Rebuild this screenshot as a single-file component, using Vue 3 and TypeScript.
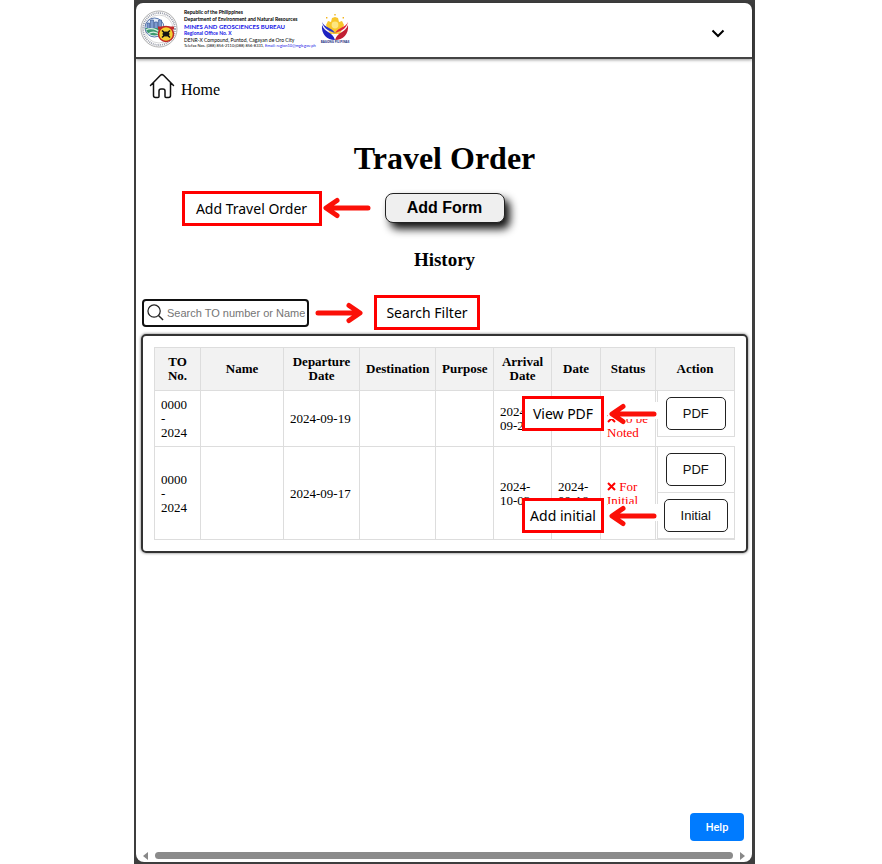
<script setup lang="ts">
interface Action {
  label: string
  hint?: string
}

interface TravelOrder {
  id: number
  departure: string
  arrival: string
  date: string
  status: string[]
  lowStatus: boolean
  actions: Action[]
}

const columns = ['TO No.', 'Name', 'Departure Date', 'Destination', 'Purpose', 'Arrival Date', 'Date', 'Status', 'Action']

const orders: TravelOrder[] = [
  {
    id: 1,
    departure: '2024-09-19',
    arrival: '2024-09-20',
    date: '',
    status: ['To be', 'Noted'],
    lowStatus: true,
    actions: [{ label: 'PDF', hint: 'View PDF' }],
  },
  {
    id: 2,
    departure: '2024-09-17',
    arrival: '2024-10-03',
    date: '2024-09-16',
    status: ['For', 'Initial'],
    lowStatus: false,
    actions: [{ label: 'PDF' }, { label: 'Initial', hint: 'Add initial' }],
  },
]
</script>

<template>
  <div class="frame">
    <div class="window">
      <header class="topbar">
        <svg class="seal" viewBox="0 0 38 38" aria-hidden="true">
          <circle cx="19" cy="19" r="18" fill="#fff" stroke="#999" stroke-width="0.8" />
          <circle cx="19" cy="19" r="16" fill="none" stroke="#9a9eaa" stroke-width="1.8" stroke-dasharray="1 0.9" />
          <circle cx="19" cy="19" r="14" fill="#fff" stroke="#aaa" stroke-width="0.5" />
          <circle cx="14.500" cy="17.500" r="9.500" fill="#e4edf8" stroke="#34589b" stroke-width="0.8" />
          <path d="M5.200 18h18.600A9.500 9.500 0 0 1 5.200 18z" fill="#3c9a70" />
          <path d="M6 20q7-4 16 4M8 24q6-4 12 1" fill="none" stroke="#d7eee0" stroke-width="1.200" />
          <path d="M7 18v-5h2.500v5M10.500 18v-8h3v8M14.500 18v-6h3v6M18.500 18v-8h3v8" fill="#7d9bd0" stroke="#2e4f8d" stroke-width="0.600" />
          <path d="M18 16.500h16v3H18z" fill="#c02828" />
          <circle cx="26" cy="24" r="7.500" fill="#f4cf32" stroke="#c02828" stroke-width="1.500" />
          <path d="M22 20.500l8 7m0-7l-8 7" stroke="#111" stroke-width="1.600" />
          <ellipse cx="26" cy="24" rx="3.500" ry="2.500" fill="#151515" />
        </svg>
        <div class="agency">
          <span class="line strong">Republic of the Philippines</span>
          <span class="line strong">Department of Environment and Natural Resources</span>
          <span class="line strong bureau">MINES AND GEOSCIENCES BUREAU</span>
          <span class="line strong blue">Regional Office No. X</span>
          <span class="line">DENR-X Compound, Puntod, Cagayan de Oro City</span>
          <span class="line tiny">Telefax Nos. (088) 856-2110;(088) 856-8331, <span class="blue">Email: region10@mgb.gov.ph</span></span>
        </div>
        <div class="bagong">
          <svg viewBox="0 0 32 26" aria-hidden="true">
            <path d="M7 11l2-4 3 1 1-4 3-1 3 1 1 4 3-1 2 4-4 9H11z" fill="#f8c62c" />
            <path d="M15.300 0h1.400v1.600h-1.400zM7 3h1.400v1.400H7zM23.600 3H25v1.400h-1.400z" fill="#f2b51e" />
            <circle cx="16" cy="11" r="3.400" fill="#fde680" />
            <path d="M3 8c3 6 9 5 13 11-5-2-11-3-13-11z" fill="#2b36c9" />
            <path d="M3 11c3 8 10 6 13 15C8 26 2 20 3 11z" fill="#1d22c0" />
            <path d="M29 8c-3 6-9 5-13 11 5-2 11-3 13-11z" fill="#e0283a" />
            <path d="M29 11c-3 8-10 6-13 15 8 0 14-6 13-15z" fill="#c11e32" />
            <path d="M4 13c3 5 9 4 12 9M28 13c-3 5-9 4-12 9" fill="none" stroke="#f3dfe4" stroke-width="0.400" />
          </svg>
          <span>BAGONG PILIPINAS</span>
        </div>
        <button class="menu" type="button" aria-label="Open menu">
          <svg viewBox="0 0 14 9" aria-hidden="true">
            <path d="M1.500 1.500L7 7l5.500-5.500" fill="none" stroke="#000" stroke-width="2" />
          </svg>
        </button>
      </header>

      <nav>
        <a class="home" href="#">
          <svg viewBox="0 0 26 26" aria-hidden="true">
            <path
              d="M1.500 12.500L11.500 2.300q1.500-1.300 3 0L24.500 12.500M4.500 10v12.500q0 2 2 2H9q1 0 1-1V18q0-2 2-2h2q2 0 2 2v5.500q0 1 1 1h2.500q2 0 2-2V10"
              fill="none" stroke="#111" stroke-width="1.500" stroke-linecap="round" stroke-linejoin="round" />
          </svg>
          <span>Home</span>
        </a>
      </nav>

      <main>
        <h1>Travel Order</h1>
        <div class="add-row">
          <div class="note add-note">
            <span class="callout large">Add Travel Order</span>
            <svg class="arrow" viewBox="0 0 50 24" aria-hidden="true">
              <path d="M46 12H5M15 4.500L4 12l11 7.500" />
            </svg>
          </div>
          <button class="add" type="button">Add Form</button>
        </div>
        <h2>History</h2>

        <div class="search-row">
          <label class="search">
            <svg viewBox="0 0 18 18" aria-hidden="true">
              <circle cx="7.500" cy="7.500" r="6.500" fill="none" stroke="#222" stroke-width="1.300" />
              <path d="M12.200 12.200L17 17" stroke="#222" stroke-width="1.500" />
            </svg>
            <input type="text" placeholder="Search TO number or Name" aria-label="Search TO number or Name" />
          </label>
          <svg class="arrow" viewBox="0 0 50 24" aria-hidden="true">
            <path d="M4 12h41M35 4.500l11 7.500-11 7.500" />
          </svg>
          <span class="callout medium">Search Filter</span>
        </div>

        <section class="card">
          <table>
            <colgroup>
              <col v-for="(name, i) in columns" :key="name" :class="`col-${i}`" />
            </colgroup>
            <thead>
              <tr>
                <th v-for="name in columns" :key="name" scope="col">{{ name }}</th>
              </tr>
            </thead>
            <tbody>
              <tr v-for="order in orders" :key="order.id">
                <td>0000<br />-<br />2024</td>
                <td></td>
                <td>{{ order.departure }}</td>
                <td></td>
                <td></td>
                <td>{{ order.arrival }}</td>
                <td>{{ order.date }}</td>
                <td class="status" :class="{ low: order.lowStatus }">
                  <svg viewBox="0 0 9 9" aria-hidden="true"><path d="M1 1l7 7M8 1L1 8" /></svg>
                  {{ order.status[0] }}<br />{{ order.status[1] }}
                </td>
                <td class="actions">
                  <div v-for="action in order.actions" :key="action.label" class="action">
                    <button type="button">{{ action.label }}</button>
                    <div v-if="action.hint" class="note row-note">
                      <span class="callout small">{{ action.hint }}</span>
                      <svg class="arrow" viewBox="0 0 50 24" aria-hidden="true">
                        <rect width="50" height="17" fill="#fff" />
                        <path d="M46 12H5M15 4.500L4 12l11 7.500" />
                      </svg>
                    </div>
                  </div>
                </td>
              </tr>
            </tbody>
          </table>
        </section>
      </main>

      <footer>
        <button class="help" type="button">Help</button>
      </footer>
      <div class="scrollbar" aria-hidden="true">
        <svg viewBox="0 0 5 8"><path d="M5 0v8L0 4z" /></svg>
        <div class="thumb"></div>
        <svg viewBox="0 0 5 8"><path d="M0 0v8l5-4z" /></svg>
      </div>
    </div>
  </div>
</template>

<style>
body {
  background: #fff;
}
</style>

<style scoped>
* {
  box-sizing: border-box;
}

.frame {
  min-height: 100vh;
  margin: 0 127px 0 134px;
  padding: 3px 3px 2px 2px;
  display: flex;
  background: #3e3e3e;
  color: #000;
  font-family: "Liberation Serif", "Times New Roman", serif;
}

.window {
  flex: 1;
  min-width: 0;
  display: flex;
  flex-direction: column;
  background: #fff;
  border-radius: 7px 7px 8px 8px;
}

button {
  font-family: "Liberation Sans", Arial, sans-serif;
  cursor: pointer;
}

.topbar {
  height: 56px;
  padding: 0 27px 2px 4px;
  display: flex;
  align-items: center;
  border-bottom: 2px solid #444;
  box-shadow: 0 1px 3px rgba(0, 0, 0, 0.4);
}

.seal {
  width: 38px;
  height: 38px;
}

.agency {
  margin-left: 6px;
  width: 129px;
  display: flex;
  flex-direction: column;
  font-family: Lato, sans-serif;
  font-size: 5px;
  line-height: 6px;
  white-space: nowrap;
}

.strong {
  font-weight: 700;
  line-height: 7px;
}

.bureau {
  font-size: 6px;
}

.bureau,
.blue {
  color: #1414e6;
}

.tiny {
  font-size: 4px;
}

.bagong {
  margin-left: 6px;
  display: flex;
  flex-direction: column;
  align-items: center;
  color: #1c2b80;
  font: 700 3px/4px "Open Sans", sans-serif;
  white-space: nowrap;
}

.bagong svg {
  width: 32px;
  height: 26px;
}

.menu {
  margin-left: auto;
  padding: 0;
  display: flex;
  border: 0;
  background: none;
}

.menu svg {
  width: 14px;
  height: 9px;
  margin-top: 8px;
}

nav {
  padding: 13px 13px 0;
  display: flex;
}

.home {
  display: flex;
  align-items: center;
  gap: 6px;
  color: #000;
  font-size: 16px;
  line-height: 18px;
  text-decoration: none;
}

.home svg {
  width: 26px;
  height: 26px;
}

.home span {
  padding-top: 9px;
}

main {
  padding: 0 4px 0 5px;
}

h1,
h2 {
  margin: 0;
  text-align: center;
}

h1 {
  margin-top: 41px;
  font-size: 32px;
  line-height: 37px;
}

.add-row {
  position: relative;
  margin-top: 16px;
  display: flex;
  justify-content: center;
}

.add {
  width: 120px;
  height: 30px;
  padding: 0;
  border: 1px solid #222;
  border-radius: 8px;
  background: #efefef;
  color: #000;
  font-size: 16px;
  font-weight: 700;
  box-shadow: 5px 6px 9px #111;
}

.note {
  position: absolute;
  top: 0;
  bottom: 0;
  display: flex;
  align-items: center;
}

.add-note {
  right: calc(50% + 73px);
}

.row-note {
  right: 100%;
  gap: 4px;
}

.callout {
  height: 35px;
  flex: none;
  border: 3px solid #f00;
  background: #fff;
  color: #000;
  font: 14px/29px "Noto Sans", "Open Sans", sans-serif;
  text-align: center;
  white-space: nowrap;
}

.large {
  width: 140px;
}

.medium {
  width: 106px;
  margin-left: 10px;
}

.small {
  width: 82px;
}

.arrow {
  width: 50px;
  height: 24px;
  flex: none;
}

.arrow path {
  fill: none;
  stroke: #fb1008;
  stroke-width: 5px;
  stroke-linecap: round;
  stroke-linejoin: round;
}

h2 {
  margin-top: 26px;
  font-size: 19px;
  line-height: 22px;
}

.search-row {
  margin-top: 24px;
  display: flex;
  align-items: center;
}

.search {
  width: 167px;
  height: 28px;
  margin: 0 5px 0 1px;
  padding: 0 2px 0 3px;
  display: flex;
  align-items: center;
  gap: 3px;
  border: 2px solid #111;
  border-radius: 4px;
  background: #fff;
}

.search svg {
  width: 17px;
  height: 17px;
  flex: none;
}

.search input {
  width: 100%;
  min-width: 0;
  padding: 0;
  border: 0;
  outline: 0;
  background: none;
  font: 11px "Liberation Sans", Arial, sans-serif;
}

.search input::placeholder {
  color: #757575;
}

.card {
  margin-top: 4px;
  padding: 11px;
  border: 2px solid #333;
  border-radius: 5px;
  box-shadow: 0 0 3px rgba(0, 0, 0, 0.6);
}

table {
  width: 100%;
  table-layout: fixed;
  border-collapse: collapse;
  font-size: 13px;
  line-height: 14px;
}

.col-0 { width: 46px; }
.col-1 { width: 83px; }
.col-2 { width: 76px; }
.col-3 { width: 76px; }
.col-4 { width: 58px; }
.col-5 { width: 58px; }
.col-6 { width: 49px; }
.col-7 { width: 55px; }

th,
td {
  padding: 7px 6px;
  border: 1px solid #ddd;
}

th {
  background: #f2f2f2;
}

td {
  padding-bottom: 6px;
  text-align: left;
}

.status {
  color: #f00;
  white-space: nowrap;
}

.status svg {
  width: 9px;
  height: 9px;
}

.status path {
  stroke: #f00;
  stroke-width: 2px;
}

.low {
  vertical-align: bottom;
}

.actions {
  padding: 0 0 0 1px;
  border-right: 0;
  vertical-align: top;
}

.action {
  position: relative;
  height: 46px;
  display: flex;
  align-items: center;
  justify-content: center;
  border: 1px solid #ddd;
  border-top: 0;
}

.action button {
  height: 33px;
  padding: 0 16px;
  border: 1px solid #222;
  border-radius: 5px;
  background: #fff;
  color: #111;
  font-size: 13px;
}

footer {
  margin-top: auto;
  padding: 20px 8px 10px;
  display: flex;
  justify-content: flex-end;
}

.help {
  width: 54px;
  height: 28px;
  padding: 0;
  border: 0;
  border-radius: 4px;
  background: #007bff;
  color: #fff;
  font: 500 11px Roboto, sans-serif;
}

.scrollbar {
  height: 11px;
  padding: 0 7px 2px;
  display: flex;
  align-items: center;
  gap: 7px;
}

.scrollbar svg {
  width: 5px;
  height: 8px;
  fill: #888;
}

.thumb {
  flex: 1;
  height: 7px;
  border-radius: 4px;
  background: #8b8b8b;
}
</style>
